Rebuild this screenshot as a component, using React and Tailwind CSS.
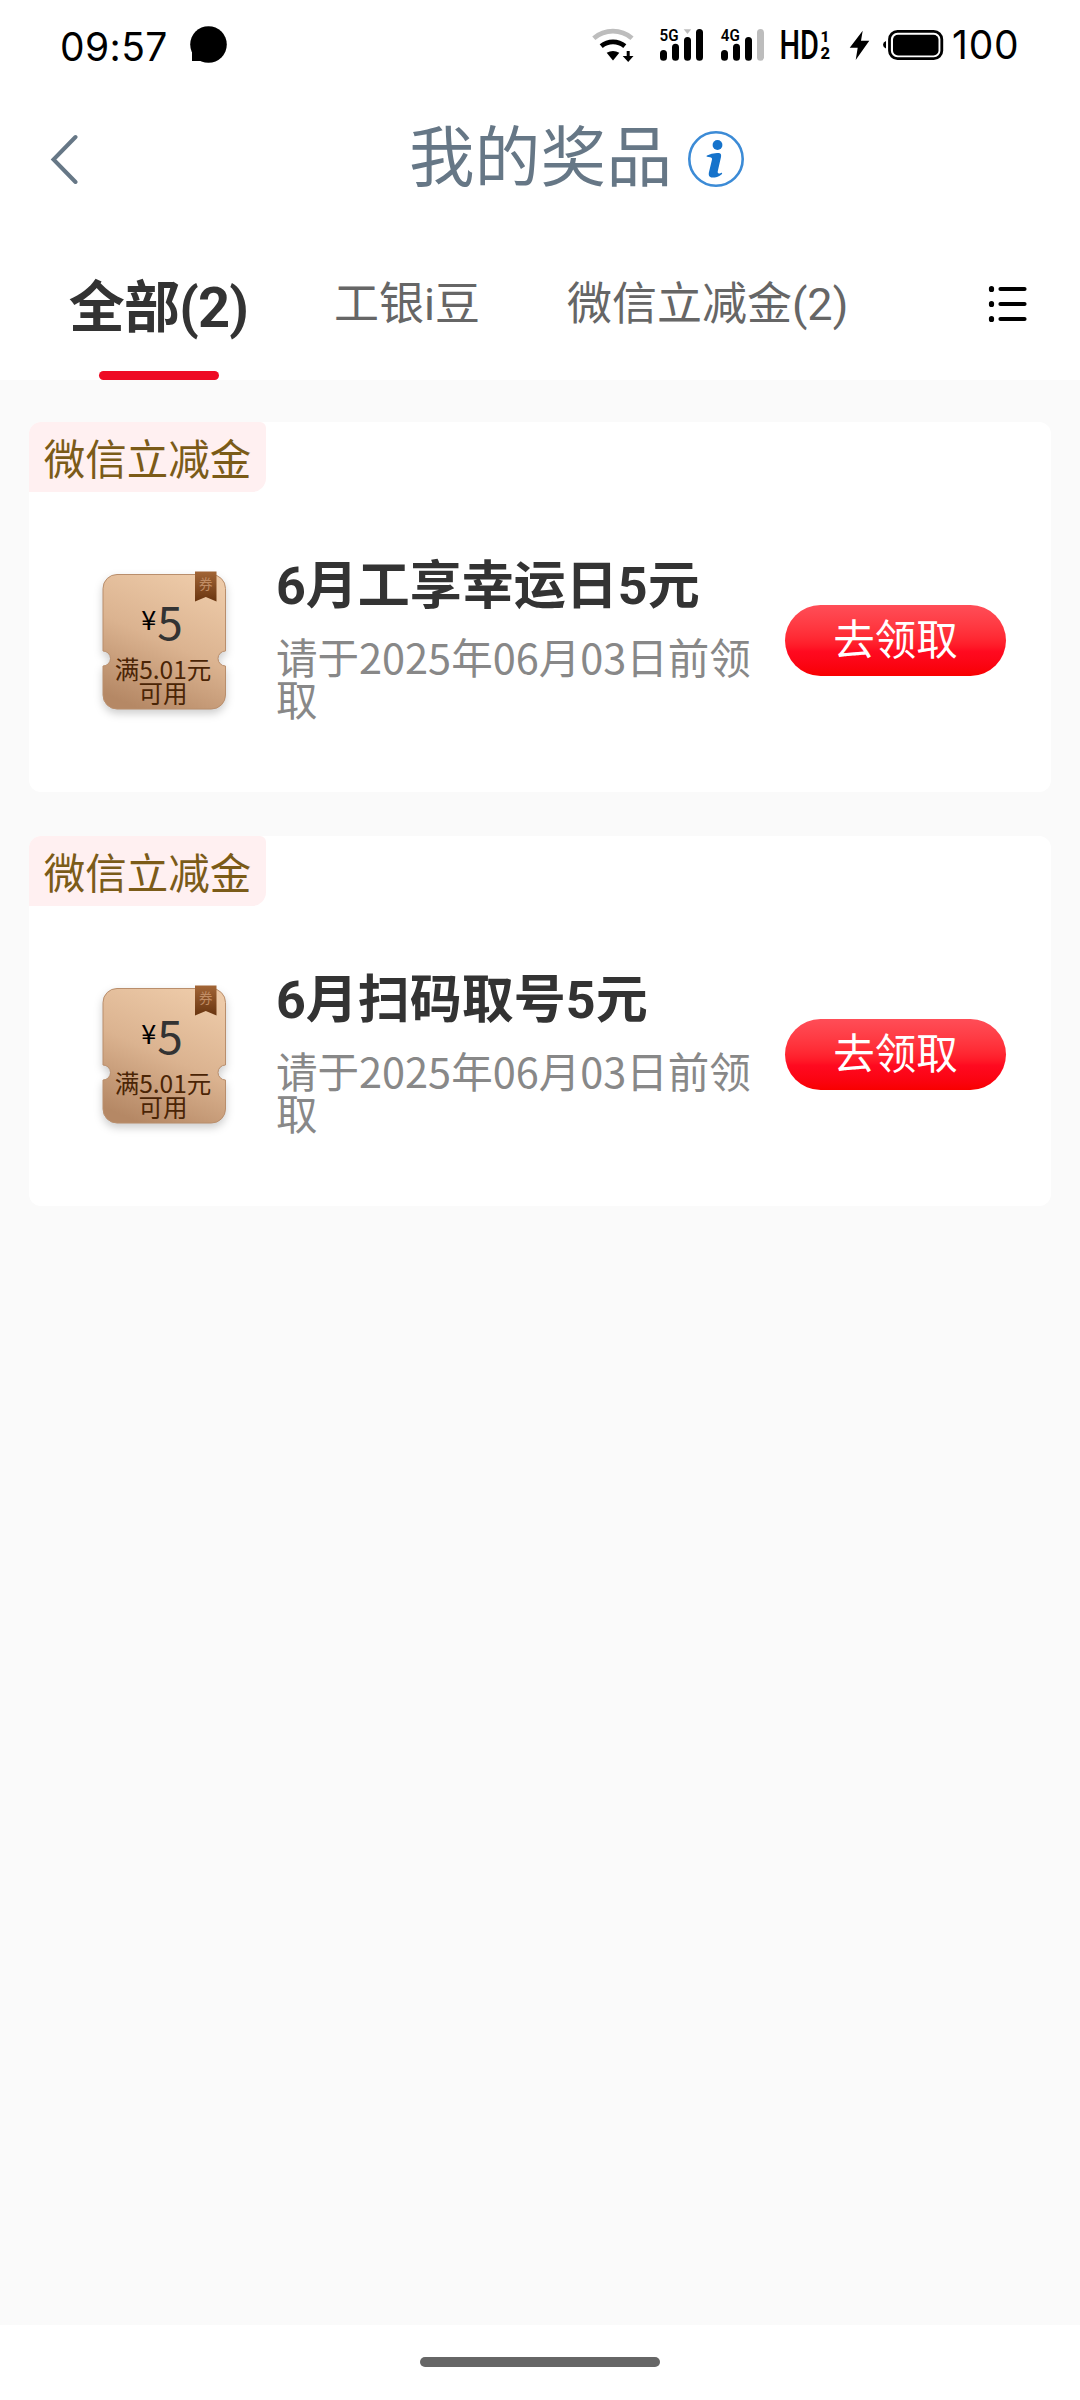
const prizes = [
  { id: 1, tag: "微信立减金", title: "6月工享幸运日5元", desc: "请于2025年06月03日前领取", amount: "5", limit: "满5.01元", note: "可用" },
  { id: 2, tag: "微信立减金", title: "6月扫码取号5元", desc: "请于2025年06月03日前领取", amount: "5", limit: "满5.01元", note: "可用" },
];

export default function App() {
  return (
    <div className="flex flex-col w-[1080px] h-[2400px] bg-white overflow-hidden font-['Noto_Sans_CJK_SC',sans-serif]">
      <StatusBar />
      <NavBar />
      <Tabs />
      <main className="flex-1 bg-[#fafafa] pt-[42px] px-[29px]">
        <div className="flex flex-col gap-[44px]">
          {prizes.map((prize) => (
            <PrizeCard key={prize.id} prize={prize} />
          ))}
        </div>
      </main>
      <footer className="h-[75px] flex justify-center pt-8">
        <div className="w-[240px] h-[10px] rounded-full bg-[#666666]"></div>
      </footer>
    </div>
  );
}

function StatusBar() {
  return (
    <header className="h-[90px] shrink-0 flex justify-between pl-[60px] pr-[60px] text-black font-['Inter',sans-serif]">
      <div className="flex">
        <span className="text-[39px] leading-[93px] tracking-[0.4px]">09:57</span>
        <svg className="ml-[21px] mt-[26px] w-[38px] h-[38px]" viewBox="0 0 38 38">
          <circle cx="19.5" cy="18.5" r="18.3" />
          <path d="M3 22v13h16z" />
        </svg>
      </div>
      <StatusIcons />
    </header>
  );
}

function StatusIcons() {
  return (
    <svg className="w-[460px] h-[70px] mt-[10px] -mr-[30px] shrink-0" viewBox="0 0 460 70">
      {/* wifi */}
      <g fill="none" strokeWidth="4.8">
        <path d="M3.8 28.200A29.300 29.300 0 0 1 42 28.200" stroke="#bdbdbd" />
        <path d="M11.200 36.200A18.500 18.500 0 0 1 34.800 36.200" stroke="#000" />
      </g>
      <path d="M16.700 42.700Q23 39.500 29.300 42.700L23 50.500Z" />
      <path d="M36.700 41h3v5h3.800L38.200 52l-5.500-6h4z" />

      {/* 5G */}
      <text x="69.500" y="30.700" fontSize="16" fontFamily="Roboto" fontWeight="600" textLength="19" lengthAdjust="spacingAndGlyphs">5G</text>
      <g strokeWidth="7" strokeLinecap="round" stroke="#000">
        <path d="M73.500 43.500v3.700M85.500 37.200v10M97.500 30.500v16.700M109.500 22.500v24.700" />
      </g>
      <path d="M93.700 19.300h7.500l-3.700 4.700z" fill="#bdbdbd" />

      {/* 4G */}
      <text x="130.800" y="30.700" fontSize="16" fontFamily="Roboto" fontWeight="600" textLength="19" lengthAdjust="spacingAndGlyphs">4G</text>
      <g strokeWidth="7" strokeLinecap="round" stroke="#000">
        <path d="M134.500 43.500v3.700M146.500 37.200v10M158.500 30.500v16.700" />
        <path d="M170.500 22.500v24.700" stroke="#bdbdbd" />
      </g>

      {/* HD voice */}
      <text x="189.500" y="49" fontSize="40" fontFamily="Roboto" fontWeight="500" textLength="39.500" lengthAdjust="spacingAndGlyphs">HD</text>
      <text x="230.500" y="32" fontSize="15.500" fontFamily="Roboto" fontWeight="800">1</text>
      <text x="230.500" y="49" fontSize="16.500" fontFamily="Roboto" fontWeight="800">2</text>

      {/* charging */}
      <path d="M272.700 20.700L259.700 37.700h8L265.700 50 279.300 30.700h-8.300z" />

      {/* battery */}
      <path d="M296 31v7.500q-3-1.200-3-3.700t3-3.800z" />
      <rect x="299.500" y="21.300" width="52.300" height="27.400" rx="8" fill="none" stroke="#000" strokeWidth="2.800" />
      <rect x="303" y="24.800" width="45.500" height="20.600" rx="5" />
      <text x="362" y="49" fontSize="39" fontFamily="Inter" letterSpacing="0.800">100</text>
    </svg>
  );
}

function NavBar() {
  return (
    <div className="h-[140px] shrink-0 flex items-start text-[#667786]">
      <svg className="w-[30px] h-[50px] ml-[49px] mt-[44px]" viewBox="0 0 30 50" fill="none" stroke="#667786" strokeWidth="4" strokeLinecap="round">
        <path d="M26.500 3L4.500 25.500l22 22.500" />
      </svg>
      <h1 className="ml-[330px] text-[65.500px] leading-[125px] tracking-[0.300px]">我的奖品</h1>
      <svg className="w-[58px] h-[58px] ml-[15px] mt-[40px]" viewBox="0 0 58 58">
        <circle cx="29" cy="29" r="26.700" fill="none" stroke="#3c8bd6" strokeWidth="2.600" />
        <circle cx="30.500" cy="15" r="4.900" fill="#1673cb" />
        <path d="M20 25.500q5-3 12-2.500c2 .2 2.400 2 2 4l-3.300 14.500q-.5 3 3.300 1.500c1.500-.5 1.500.5.500 1.500-3 2.500-6 3-9 3-3.500 0-4.200-2.500-3.500-5.500l3-12.500q.5-2.500-3.500-2.500c-2 0-2.500-.8-1.500-1.500z" fill="#1673cb" />
      </svg>
    </div>
  );
}

function Tabs() {
  return (
    <nav className="h-[150px] shrink-0 flex text-[#666666] text-[45px] font-['Roboto','Noto_Sans_CJK_SC',sans-serif]">
      <div className="ml-[69px] w-[179px] flex flex-col items-center">
        <span className="h-[141px] text-[56px] leading-[156px] font-bold text-[#333333] whitespace-nowrap tracking-[-0.8px]">全部(2)</span>
        <span className="w-[120px] h-[9px] rounded-full bg-[#ee0a24]"></span>
      </div>
      <span className="ml-[86px] leading-[149px]">工银i豆</span>
      <span className="ml-[87px] leading-[149px]">微信立减金(2)</span>
      <svg className="ml-auto mr-[51px] mt-[54px] w-[42px] h-[40px]" viewBox="0 0 42 40" stroke="#000" strokeWidth="4.200" strokeLinecap="round">
        <path d="M13.500 5h24M13.500 20h24M13.500 35h24" />
        <path d="M4.500 4.500v1M4.500 19.500v1M4.500 34.500v1" strokeWidth="5.200" />
      </svg>
    </nav>
  );
}

function PrizeCard({ prize }) {
  return (
    <section className="h-[370px] bg-white rounded-[12px] flex flex-col items-start">
      <div className="w-[237px] h-[70px] rounded-tl-[12px] rounded-tr-[6px] rounded-br-[14px] bg-[#fff0f1] text-[#7b5b18] text-[41.500px] leading-[71px] text-center whitespace-nowrap">
        {prize.tag}
      </div>
      <div className="flex items-start w-full">
        <Coupon prize={prize} />
        <div className="ml-[46px] mt-[57px] w-[480px] shrink-0">
          <h2 className="text-[52px] leading-[76px] font-bold text-[#333333] font-['Roboto','Noto_Sans_CJK_SC',sans-serif]">{prize.title}</h2>
          <p className="mt-[10px] text-[41.500px] leading-[42px] text-[#888888]">{prize.desc}</p>
        </div>
        <button className="ml-[29px] mt-[113px] w-[221px] h-[71px] pb-[8px] shrink-0 rounded-full bg-linear-to-b from-[#ff4d57] via-[#ff0a20] via-65% to-[#f80000] text-white text-[41.500px] leading-[56px]">
          去领取
        </button>
      </div>
    </section>
  );
}

function Coupon({ prize }) {
  return (
    <div className="relative ml-[68px] mt-[74px] w-[133px] h-[156px] shrink-0">
      <svg className="absolute inset-0 w-[133px] h-[156px] overflow-visible" viewBox="0 0 133 156">
        <defs>
          <linearGradient id="coupon" x1="0.700" y1="0" x2="0.300" y2="1">
            <stop offset="0" stopColor="#edcaa8" />
            <stop offset="0.500" stopColor="#dbb390" />
            <stop offset="1" stopColor="#b58865" />
          </linearGradient>
          <linearGradient id="ribbon" x1="0" y1="0" x2="0" y2="1">
            <stop offset="0" stopColor="#a26536" />
            <stop offset="1" stopColor="#693510" />
          </linearGradient>
        </defs>
        <path
          d="M20 8.500H114.500a14 14 0 0 1 14 14V85a7.500 7.500 0 0 0 0 15V129a14 14 0 0 1-14 14H20a14 14 0 0 1-14-14V100a7.500 7.500 0 0 0 0-15V22.500a14 14 0 0 1 14-14z"
          fill="url(#coupon)"
          stroke="#b98e6c"
          strokeWidth="1"
          className="drop-shadow-[0_4px_4px_rgba(0,0,0,0.200)]"
        />
        <path d="M98 5.500H119.500V35.500l-10.700-4.500-10.800 4.500z" fill="url(#ribbon)" />
        <text x="102" y="23" fontSize="13.500" fill="#c08c64">券</text>
      </svg>
      <div className="relative pt-[24px] flex flex-col items-center">
        <div className="flex items-center h-[60px] leading-[60px] text-[#333333] -ml-[3px]">
          <span className="text-[27px] text-black leading-[58px] self-start mr-[1px]">¥</span>
          <span className="text-[46px]">{prize.amount}</span>
        </div>
        <p className="mt-[7px] -ml-[1px] text-[24.500px] leading-[24px] text-center text-[#4a2405] whitespace-nowrap">
          {prize.limit}
          <br />
          {prize.note}
        </p>
      </div>
    </div>
  );
}
